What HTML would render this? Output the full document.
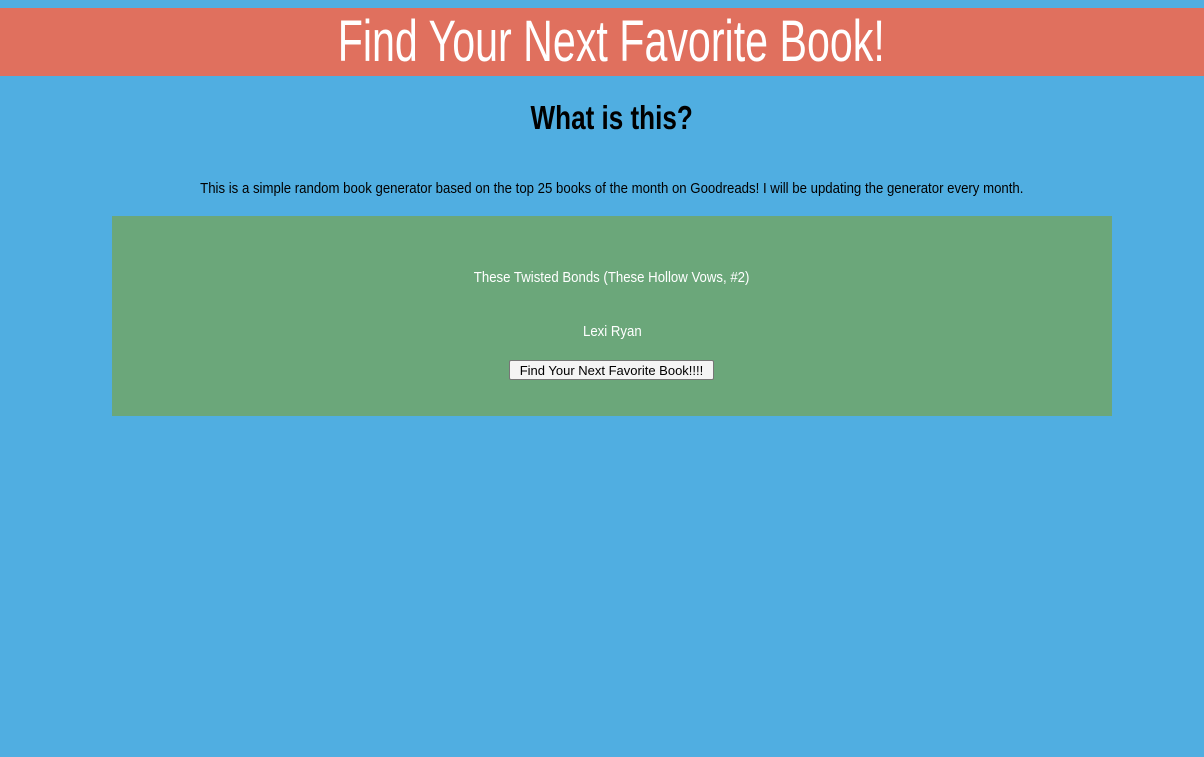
<!DOCTYPE html>
<html><head><meta charset="utf-8"><style>
html,body{margin:0;padding:0;}
body{width:1204px;height:757px;background:#50AEE1;font-family:"Liberation Sans",sans-serif;overflow:hidden;position:relative;}
.c{position:absolute;left:0;width:1204px;text-align:center;}
.c span{display:inline-block;white-space:nowrap;}
.hdr{top:8px;height:68px;background:#E0705E;color:#fff;font-size:58px;line-height:68px;}
.hdr span{transform:scaleX(0.71);position:relative;left:9px;}
h2{top:98px;margin:0;font-size:33px;line-height:40px;font-weight:bold;color:#000;}
h2 span{transform:scaleX(0.79);position:relative;left:10px;}
.p{top:179px;font-size:15px;line-height:20px;color:#000;}
.p span{transform:scaleX(0.88);position:relative;left:10px;}
.box{position:absolute;left:112px;top:216px;width:1000px;height:200px;background:#6BA77A;color:#fff;font-size:15px;}
.box .c{width:1000px;line-height:20px;}
.box .c span{transform:scaleX(0.88);}
.t1{top:52px;}
.t2{top:106px;}
button{position:absolute;top:144px;left:397px;width:205px;height:20px;font-family:"Liberation Sans",sans-serif;font-size:13px;padding:0;background:#f4f4f4;border:1px solid #777;border-radius:2px;color:#000;}
</style></head><body>
<div class="c hdr"><span>Find Your Next Favorite Book!</span></div>
<h2 class="c"><span>What is this?</span></h2>
<div class="c p"><span>This is a simple random book generator based on the top 25 books of the month on Goodreads! I will be updating the generator every month.</span></div>
<div class="box">
<div class="c t1"><span>These Twisted Bonds (These Hollow Vows, #2)</span></div>
<div class="c t2"><span>Lexi Ryan</span></div>
<button>Find Your Next Favorite Book!!!!</button>
</div>
</body></html>
